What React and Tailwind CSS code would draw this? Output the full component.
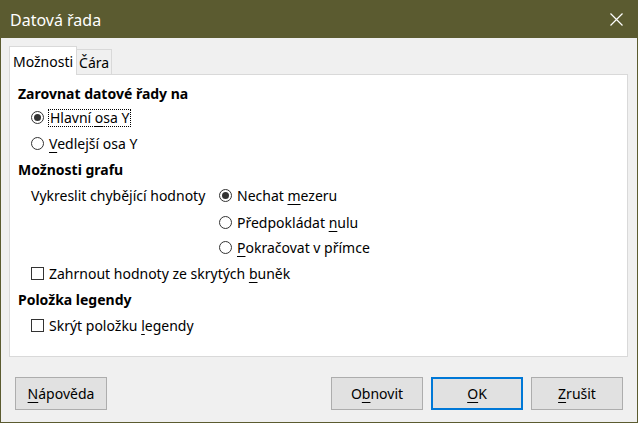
import React from "react";

const FONT = { fontFamily: '"Noto Sans", "Open Sans", sans-serif' };

const Radio = ({ checked }) => (
  <svg width="13" height="13" viewBox="0 0 13 13" className="shrink-0">
    <circle cx="6.5" cy="6.5" r="6" fill="#fff" stroke="#333" strokeWidth="1" />
    {checked && <circle cx="6.5" cy="6.5" r="3.5" fill="#333" />}
  </svg>
);

const Check = () => (
  <svg width="13" height="13" viewBox="0 0 13 13" className="shrink-0">
    <rect x="0.5" y="0.5" width="12" height="12" fill="#fff" stroke="#333" strokeWidth="1" />
  </svg>
);

const U = ({ children }) => <span className="underline underline-offset-[3px] decoration-1">{children}</span>;

const Btn = ({ children, primary }) => (
  <button
    type="button"
    className={`w-[92px] h-[33px] bg-[#e1e1e1] text-[14px] text-black ${primary ? "border-2 border-[#0078d7]" : "border border-[#adadad]"}`}
  >
    {children}
  </button>
);

export default function App() {
  return (
    <div style={FONT} className="w-[638px] h-[423px] border border-[#5b5b30] bg-[#f0f0f0] flex flex-col text-black">
      <div className="h-[37px] bg-[#5b5b30] flex items-center justify-between pl-[9px] pr-[14px] shrink-0">
        <span className="text-white text-[16px]">Datová řada</span>
        <svg width="13" height="13" viewBox="0 0 13 13">
          <path d="M0.5 0.5 L12.5 12.5 M12.5 0.5 L0.5 12.5" stroke="#fff" strokeWidth="1.2" />
        </svg>
      </div>

      <div className="pl-[8px] pr-[9px] pt-[7px]">
        <div className="flex items-end h-[29px] text-[14px]">
          <div className="h-[29px] px-[3px] bg-white border border-b-0 border-[#d9d9d9] -mb-px relative z-10 flex items-center">
            Možnosti
          </div>
          <div className="h-[25px] px-[2px] bg-[#f0f0f0] border border-l-0 border-b-0 border-[#d9d9d9] flex items-center">
            Čára
          </div>
        </div>

        <div className="h-[283px] bg-white border border-[#d9d9d9] pl-[8px] pt-[6px] text-[14px]">
          <div className="h-[24px] flex items-center font-bold">Zarovnat datové řady na</div>
          <div className="h-[25px] flex items-center gap-[4px] pl-[13px]">
            <Radio checked />
            <span className="border border-dotted border-black px-px leading-[14px] py-px">
              Hlavní <U>o</U>sa Y
            </span>
          </div>
          <div className="h-[26px] flex items-center gap-[5px] pl-[13px]">
            <Radio />
            <span><U>V</U>edlejší osa Y</span>
          </div>
          <div className="h-[26px] flex items-center font-bold">Možnosti grafu</div>
          <div className="h-[27px] flex items-center pl-[13px]">
            <span className="w-[188px]">Vykreslit chybějící hodnoty</span>
            <Radio checked />
            <span className="ml-[5px]">Nechat <U>m</U>ezeru</span>
          </div>
          <div className="h-[26px] flex items-center pl-[201px]">
            <Radio />
            <span className="ml-[5px]">Předpokládat <U>n</U>ulu</span>
          </div>
          <div className="h-[25px] flex items-center pl-[201px]">
            <Radio />
            <span className="ml-[5px]"><U>P</U>okračovat v přímce</span>
          </div>
          <div className="h-[26px] flex items-center gap-[5px] pl-[13px]">
            <Check />
            <span>Zahrnout hodnoty ze skrytých <U>b</U>uněk</span>
          </div>
          <div className="h-[26px] flex items-center font-bold">Položka legendy</div>
          <div className="h-[27px] flex items-center gap-[5px] pl-[13px]">
            <Check />
            <span>Skrýt položku <U>l</U>egendy</span>
          </div>
        </div>
      </div>

      <div className="flex items-center justify-between pl-[14px] pr-[14px] mt-[20px]">
        <Btn><U>N</U>ápověda</Btn>
        <div className="flex gap-[8px]">
          <Btn>O<U>b</U>novit</Btn>
          <Btn primary><U>O</U>K</Btn>
          <Btn><U>Z</U>rušit</Btn>
        </div>
      </div>
    </div>
  );
}
